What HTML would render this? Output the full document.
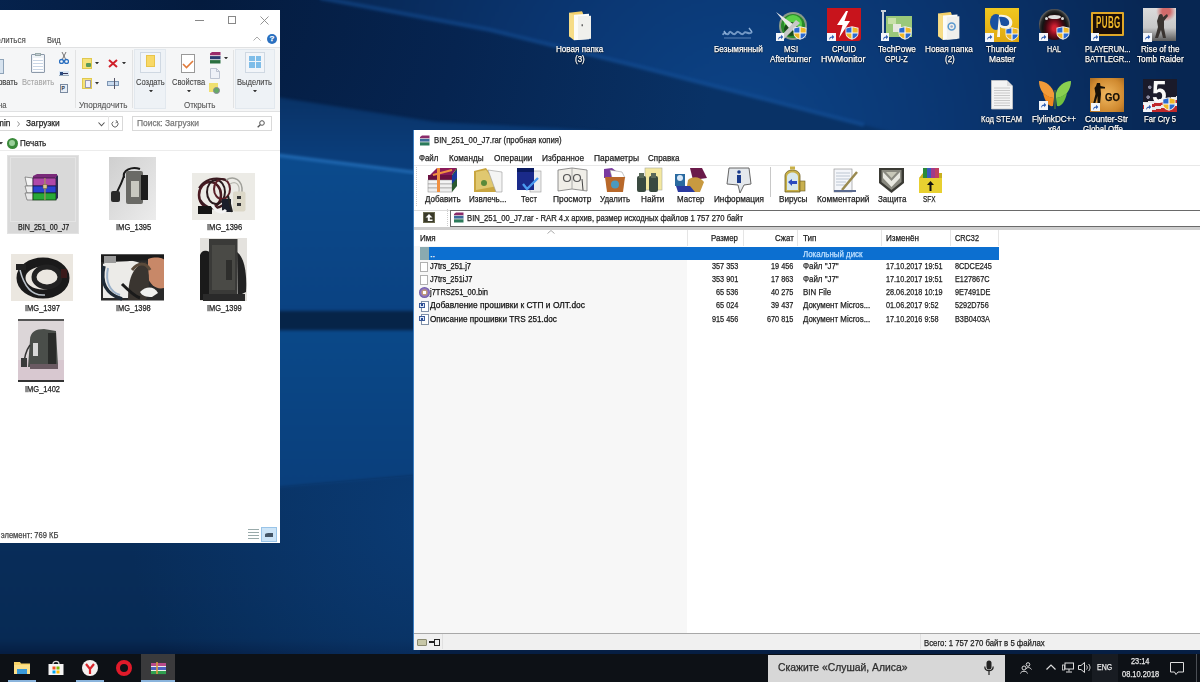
<!DOCTYPE html>
<html><head><meta charset="utf-8">
<style>
*{box-sizing:border-box}
html,body{margin:0;padding:0}
body{width:1200px;height:682px;overflow:hidden;position:relative;font-family:"Liberation Sans",sans-serif;background:#072a55}
.a{position:absolute}
.t{position:absolute;white-space:nowrap;line-height:1;transform-origin:0 0;-webkit-text-stroke:0.25px currentColor}
</style></head><body><div class="a" style="left:0;top:0;width:1200px;height:682px;overflow:hidden">
<svg class="a" style="left:0;top:0" width="1200" height="682" viewBox="0 0 1200 682">
  <defs>
    <filter id="bl" x="-10%" y="-10%" width="120%" height="120%" color-interpolation-filters="sRGB"><feGaussianBlur stdDeviation="1.8"/></filter>
    <radialGradient id="rg1" gradientUnits="userSpaceOnUse" cx="740" cy="140" r="440">
      <stop offset="0" stop-color="#0c4488"/><stop offset="0.5" stop-color="#0a3570"/><stop offset="1" stop-color="#072652"/>
    </radialGradient>
    <radialGradient id="rg0" gradientUnits="userSpaceOnUse" cx="200" cy="0" r="520">
      <stop offset="0" stop-color="#041b3e"/><stop offset="0.5" stop-color="#062450"/><stop offset="1" stop-color="#093266"/>
    </radialGradient>
    <linearGradient id="lgb" gradientUnits="userSpaceOnUse" x1="0" y1="480" x2="0" y2="660">
      <stop offset="0" stop-color="#082e5c"/><stop offset="0.88" stop-color="#072a54"/><stop offset="1" stop-color="#05183a"/>
    </linearGradient>
    <linearGradient id="lg1" gradientUnits="userSpaceOnUse" x1="0" y1="97" x2="0" y2="155">
      <stop offset="0" stop-color="#093266"/><stop offset="1" stop-color="#0a3d7a"/>
    </linearGradient>
    <linearGradient id="lgu" gradientUnits="userSpaceOnUse" x1="0" y1="160" x2="0" y2="310">
      <stop offset="0" stop-color="#0b4a8c"/><stop offset="1" stop-color="#0a4282"/>
    </linearGradient>
    <linearGradient id="lgl" gradientUnits="userSpaceOnUse" x1="0" y1="331" x2="0" y2="480">
      <stop offset="0" stop-color="#0a4888"/><stop offset="1" stop-color="#0a3f7c"/>
    </linearGradient>
    <radialGradient id="rgb2" gradientUnits="userSpaceOnUse" cx="430" cy="520" r="300">
      <stop offset="0" stop-color="#0b3e7a" stop-opacity="0.8"/><stop offset="1" stop-color="#0b3e7a" stop-opacity="0"/>
    </radialGradient>
  </defs>
  <rect width="1200" height="682" fill="url(#rg0)"/>
  <g filter="url(#bl)">
    <path d="M320,-2 L490,30 L640,67 L864,125 L1210,212 L1210,-10 L320,-10Z" fill="url(#rg1)"/>
    <path d="M-10,95 L276,97 L436,122 L560,128 L1210,180 L1210,700 L-10,700Z" fill="url(#lg1)"/>
    <path d="M-10,154 L276,155 L420,173 L420,310 L-10,310Z" fill="url(#lgu)"/>
    <path d="M-10,311 L420,311 L420,330 L-10,330Z" fill="#062448"/>
    <path d="M-10,331 L420,331 L420,475 L279,487 L-10,490Z" fill="url(#lgl)"/>
    <path d="M-10,490 L279,487 L420,475 L1210,440 L1210,700 L-10,700Z" fill="url(#lgb)"/>
  </g>
  <path d="M-10,490 L279,487 L420,475 L420,655 L-10,655Z" fill="url(#rgb2)"/>
  <path d="M-10,154 L276,155 L420,173" stroke="#2a7ac8" stroke-width="3" fill="none" opacity="0.75" filter="url(#bl)"/>
  <path d="M320,-2 L490,30 L640,67 L864,125" stroke="#1a5cab" stroke-width="4" fill="none" opacity="0.45" filter="url(#bl)"/>
</svg>
<svg class="a" style="left:569px;top:11px" width="22" height="29.5" viewBox="0 0 22 29"><path d="M0,1.5 L13,0 L14,2 L14,27 L0,25Z" fill="#f2cf6a"/><path d="M5,3.5 L20,2.5 L20,28 L5,29Z" fill="#fbfbf8"/><path d="M9,5 L22,4.5 L22,27.5 L9,28.5Z" fill="#f0f0ec"/><path d="M0,1.5 L5,3.5 L5,29 L0,25Z" fill="#f6dc86"/><rect x="12.5" y="13" width="1.5" height="2" fill="#666"/></svg>
<svg class="a" style="left:721px;top:25px" width="33" height="16" viewBox="0 0 33 16"><path d="M2,10 C3,5 6,12 8,8 C10,4 12,12 15,8 C18,4 20,12 23,8 C25,5 28,11 31,7" stroke="#8eb0d8" stroke-width="2" fill="none" opacity="0.8"/><path d="M3,13 L30,13" stroke="#6a90c0" stroke-width="1.4" opacity="0.6"/><path d="M28,3 L31,7 M3,6 L5,9" stroke="#8eb0d8" stroke-width="1.4"/></svg>
<svg class="a" style="left:775.5px;top:10.5px" width="32" height="30" viewBox="0 0 32 30"><circle cx="17" cy="15" r="14" fill="#8a9a8a"/><circle cx="17" cy="15" r="12" fill="#2a8a2a"/><circle cx="17" cy="13" r="9" fill="#5ad048"/><circle cx="15" cy="18" r="7" fill="#1a4a1a"/><path d="M0,1 L17,13 L30,27 L13,17Z" fill="#e8e8e8"/><path d="M4,26 L20,9 L24,12 L8,28Z" fill="#c8c8c8"/></svg>
<svg class="a" style="left:792.5px;top:25.8px" width="14" height="14" viewBox="0 0 14 14"><path d="M7,0.3 L13.5,1.8 L13.5,7 C13.5,10.5 10.5,12.8 7,13.8 C3.5,12.8 0.5,10.5 0.5,7 L0.5,1.8Z" fill="#f4f4f4"/><path d="M7.6,1.3 L12.7,2.5 L12.7,6.4 L7.6,6.4Z" fill="#f0b828"/><path d="M1.3,7.6 L6.4,7.6 L6.4,12.7 C3.5,11.8 1.3,10 1.3,7.6Z" fill="#f0b828"/><path d="M6.4,1.3 L1.3,2.5 L1.3,6.4 L6.4,6.4Z" fill="#2a6ad0"/><path d="M12.7,7.6 L7.6,7.6 L7.6,12.7 C10.5,11.8 12.7,10 12.7,7.6Z" fill="#2a6ad0"/></svg>
<div class="a" style="left:775.5px;top:32.5px;width:8.5px;height:8.5px;background:#f4f6fa"></div><svg class="a" style="left:776.5px;top:33.5px" width="6.5" height="6.5" viewBox="0 0 6 6"><path d="M1,5.8 C1,3.2 2,2.2 3.8,2.2 L3.8,0.8 L5.8,2.8 L3.8,4.8 L3.8,3.4 C2.6,3.4 1.8,4 1,5.8Z" fill="#2a5ab0"/></svg>
<div class="a" style="left:827px;top:7.5px;width:34px;height:33px;background:#c8141c;border-radius:0 0 3px 3px"></div><svg class="a" style="left:834px;top:11px" width="18" height="27" viewBox="0 0 18 27"><path d="M12,0 L3,14 L8.5,14 L5,27 L16,10 L10.5,10 L14,0Z" fill="#fff"/></svg>
<svg class="a" style="left:845px;top:25.8px" width="14" height="14" viewBox="0 0 14 14"><path d="M7,0.3 L13.5,1.8 L13.5,7 C13.5,10.5 10.5,12.8 7,13.8 C3.5,12.8 0.5,10.5 0.5,7 L0.5,1.8Z" fill="#f4f4f4"/><path d="M7.6,1.3 L12.7,2.5 L12.7,6.4 L7.6,6.4Z" fill="#f0b828"/><path d="M1.3,7.6 L6.4,7.6 L6.4,12.7 C3.5,11.8 1.3,10 1.3,7.6Z" fill="#f0b828"/><path d="M6.4,1.3 L1.3,2.5 L1.3,6.4 L6.4,6.4Z" fill="#2a6ad0"/><path d="M12.7,7.6 L7.6,7.6 L7.6,12.7 C10.5,11.8 12.7,10 12.7,7.6Z" fill="#2a6ad0"/></svg>
<div class="a" style="left:827px;top:32.5px;width:8.5px;height:8.5px;background:#f4f6fa"></div><svg class="a" style="left:828px;top:33.5px" width="6.5" height="6.5" viewBox="0 0 6 6"><path d="M1,5.8 C1,3.2 2,2.2 3.8,2.2 L3.8,0.8 L5.8,2.8 L3.8,4.8 L3.8,3.4 C2.6,3.4 1.8,4 1,5.8Z" fill="#2a5ab0"/></svg>
<div class="a" style="left:880.5px;top:10px;width:5px;height:2px;background:#c8d0d8"></div><div class="a" style="left:882px;top:10px;width:2px;height:23px;background:#c8d0d8"></div><div class="a" style="left:885.5px;top:15.5px;width:26.5px;height:21px;background:#9ac87a"></div><div class="a" style="left:888px;top:18px;width:8px;height:6px;background:#c8e0a8"></div><div class="a" style="left:893px;top:24px;width:8px;height:8px;background:#e8e8e0"></div>
<svg class="a" style="left:898px;top:25.8px" width="14" height="14" viewBox="0 0 14 14"><path d="M7,0.3 L13.5,1.8 L13.5,7 C13.5,10.5 10.5,12.8 7,13.8 C3.5,12.8 0.5,10.5 0.5,7 L0.5,1.8Z" fill="#f4f4f4"/><path d="M7.6,1.3 L12.7,2.5 L12.7,6.4 L7.6,6.4Z" fill="#f0b828"/><path d="M1.3,7.6 L6.4,7.6 L6.4,12.7 C3.5,11.8 1.3,10 1.3,7.6Z" fill="#f0b828"/><path d="M6.4,1.3 L1.3,2.5 L1.3,6.4 L6.4,6.4Z" fill="#2a6ad0"/><path d="M12.7,7.6 L7.6,7.6 L7.6,12.7 C10.5,11.8 12.7,10 12.7,7.6Z" fill="#2a6ad0"/></svg>
<div class="a" style="left:880.5px;top:32.5px;width:8.5px;height:8.5px;background:#f4f6fa"></div><svg class="a" style="left:881.5px;top:33.5px" width="6.5" height="6.5" viewBox="0 0 6 6"><path d="M1,5.8 C1,3.2 2,2.2 3.8,2.2 L3.8,0.8 L5.8,2.8 L3.8,4.8 L3.8,3.4 C2.6,3.4 1.8,4 1,5.8Z" fill="#2a5ab0"/></svg>
<svg class="a" style="left:938px;top:11.5px" width="21.5" height="28" viewBox="0 0 22 29"><path d="M0,1.5 L13,0 L14,2 L14,27 L0,25Z" fill="#f2cf6a"/><path d="M5,3.5 L20,2.5 L20,28 L5,29Z" fill="#fbfbf8"/><path d="M9,5 L22,4.5 L22,27.5 L9,28.5Z" fill="#f0f0ec"/><path d="M0,1.5 L5,3.5 L5,29 L0,25Z" fill="#f6dc86"/><circle cx="14" cy="15" r="3.6" fill="none" stroke="#5a9ad0" stroke-width="1.6"/><circle cx="14" cy="15" r="1.3" fill="#9ac"/></svg>
<div class="a" style="left:985px;top:8px;width:34px;height:34px;background:linear-gradient(#f0c820,#e0a810)"></div><svg class="a" style="left:988px;top:13px" width="28" height="26" viewBox="0 0 28 26"><ellipse cx="8" cy="9" rx="6" ry="8" fill="#1a50a0"/><path d="M11,2 C20,1 26,6 24,12 C22,17 15,16 12,14 L12,24 L9,24Z" fill="#f8f4e8"/><path d="M11,4 C18,3 22,7 21,11 C20,14 15,13 13,12Z" fill="#1a50a0"/></svg>
<svg class="a" style="left:1004.5px;top:26.5px" width="14" height="14" viewBox="0 0 14 14"><path d="M7,0.3 L13.5,1.8 L13.5,7 C13.5,10.5 10.5,12.8 7,13.8 C3.5,12.8 0.5,10.5 0.5,7 L0.5,1.8Z" fill="#f4f4f4"/><path d="M7.6,1.3 L12.7,2.5 L12.7,6.4 L7.6,6.4Z" fill="#f0b828"/><path d="M1.3,7.6 L6.4,7.6 L6.4,12.7 C3.5,11.8 1.3,10 1.3,7.6Z" fill="#f0b828"/><path d="M6.4,1.3 L1.3,2.5 L1.3,6.4 L6.4,6.4Z" fill="#2a6ad0"/><path d="M12.7,7.6 L7.6,7.6 L7.6,12.7 C10.5,11.8 12.7,10 12.7,7.6Z" fill="#2a6ad0"/></svg>
<div class="a" style="left:985px;top:33px;width:8.5px;height:8.5px;background:#f4f6fa"></div><svg class="a" style="left:986px;top:34px" width="6.5" height="6.5" viewBox="0 0 6 6"><path d="M1,5.8 C1,3.2 2,2.2 3.8,2.2 L3.8,0.8 L5.8,2.8 L3.8,4.8 L3.8,3.4 C2.6,3.4 1.8,4 1,5.8Z" fill="#2a5ab0"/></svg>
<div class="a" style="left:1039px;top:9px;width:31px;height:30.5px;border-radius:50%;background:radial-gradient(ellipse at 50% 62%,#d02030 0 2px,#8a1020 5px,#3a0810 9px,#141414 12px,#2a2a2a 14px,#5a5a5a 15.5px)"></div><div class="a" style="left:1048px;top:15px;width:13px;height:4px;border-radius:50%;background:#e0e0e0"></div><div class="a" style="left:1045px;top:17px;width:3px;height:3px;border-radius:50%;background:#ddd"></div><div class="a" style="left:1061px;top:17px;width:3px;height:3px;border-radius:50%;background:#ddd"></div>
<svg class="a" style="left:1056px;top:25.8px" width="14" height="14" viewBox="0 0 14 14"><path d="M7,0.3 L13.5,1.8 L13.5,7 C13.5,10.5 10.5,12.8 7,13.8 C3.5,12.8 0.5,10.5 0.5,7 L0.5,1.8Z" fill="#f4f4f4"/><path d="M7.6,1.3 L12.7,2.5 L12.7,6.4 L7.6,6.4Z" fill="#f0b828"/><path d="M1.3,7.6 L6.4,7.6 L6.4,12.7 C3.5,11.8 1.3,10 1.3,7.6Z" fill="#f0b828"/><path d="M6.4,1.3 L1.3,2.5 L1.3,6.4 L6.4,6.4Z" fill="#2a6ad0"/><path d="M12.7,7.6 L7.6,7.6 L7.6,12.7 C10.5,11.8 12.7,10 12.7,7.6Z" fill="#2a6ad0"/></svg>
<div class="a" style="left:1039px;top:32.5px;width:8.5px;height:8.5px;background:#f4f6fa"></div><svg class="a" style="left:1040px;top:33.5px" width="6.5" height="6.5" viewBox="0 0 6 6"><path d="M1,5.8 C1,3.2 2,2.2 3.8,2.2 L3.8,0.8 L5.8,2.8 L3.8,4.8 L3.8,3.4 C2.6,3.4 1.8,4 1,5.8Z" fill="#2a5ab0"/></svg>
<div class="a" style="left:1091px;top:12px;width:32.5px;height:23.5px;background:#1a0e08;border:2px solid #e0a828;border-radius:1px"></div><div class="t" style="left:1096px;top:14.5px;font-size:16px;font-weight:bold;color:#f0b828;transform:scaleX(0.5);transform-origin:0 0;letter-spacing:0.8px;-webkit-text-stroke:0">PUBG</div>
<div class="a" style="left:1090.5px;top:32.5px;width:8.5px;height:8.5px;background:#f4f6fa"></div><svg class="a" style="left:1091.5px;top:33.5px" width="6.5" height="6.5" viewBox="0 0 6 6"><path d="M1,5.8 C1,3.2 2,2.2 3.8,2.2 L3.8,0.8 L5.8,2.8 L3.8,4.8 L3.8,3.4 C2.6,3.4 1.8,4 1,5.8Z" fill="#2a5ab0"/></svg>
<div class="a" style="left:1143.3px;top:8.2px;width:33px;height:33px;background:radial-gradient(circle at 70% 10%,#d06a6a 0 4px,transparent 10px),linear-gradient(#dcdcdc,#c8c8c8 60%,#5a5a5a)"></div><svg class="a" style="left:1152px;top:12px" width="18" height="28" viewBox="0 0 18 28"><path d="M7,3 C9,1 11,2 11,5 L15,2 L16,4 L12,9 L12,16 L14,26 L11,26 L9,18 L6,26 L3,26 L6,15 L5,9Z" fill="#3a3430"/></svg>
<div class="a" style="left:1143.3px;top:33px;width:8.5px;height:8.5px;background:#f4f6fa"></div><svg class="a" style="left:1144.3px;top:34px" width="6.5" height="6.5" viewBox="0 0 6 6"><path d="M1,5.8 C1,3.2 2,2.2 3.8,2.2 L3.8,0.8 L5.8,2.8 L3.8,4.8 L3.8,3.4 C2.6,3.4 1.8,4 1,5.8Z" fill="#2a5ab0"/></svg>
<svg class="a" style="left:990.8px;top:80px" width="22" height="29.5" viewBox="0 0 22 29.5"><path d="M0.5,0.5 L16,0.5 L21.5,6 L21.5,29 L0.5,29Z" fill="#f4f4f4" stroke="#c8c8c8" stroke-width="0.8"/><path d="M16,0.5 L16,6 L21.5,6Z" fill="#ddd"/><path d="M3,8 L19,8 M3,10.5 L19,10.5 M3,13 L19,13 M3,15.5 L19,15.5 M3,18 L19,18 M3,20.5 L19,20.5 M3,23 L19,23 M3,25.5 L19,25.5" stroke="#c4c4c4" stroke-width="0.9"/></svg>
<svg class="a" style="left:1037.5px;top:80px" width="34" height="30" viewBox="0 0 34 30"><path d="M1,1 C8,1 14,6 16,13 L16,18 C13,18 8,16 5,13 C2,9 1,5 1,1Z" fill="#f29a38"/><path d="M5,13 C9,16 14,18 16,18 L15,26 C11,27 7,22 5,13Z" fill="#f08a20"/><path d="M33,1 C26,1 20,6 18,13 L18,18 C21,18 26,16 29,13 C32,9 33,5 33,1Z" fill="#8ad050"/><path d="M29,13 C25,16 20,18 18,18 L19,26 C23,27 27,22 29,13Z" fill="#70c040"/><path d="M17,10 L17,29" stroke="#5a8a30" stroke-width="1"/></svg>
<div class="a" style="left:1039px;top:101px;width:8.5px;height:8.5px;background:#f4f6fa"></div><svg class="a" style="left:1040px;top:102px" width="6.5" height="6.5" viewBox="0 0 6 6"><path d="M1,5.8 C1,3.2 2,2.2 3.8,2.2 L3.8,0.8 L5.8,2.8 L3.8,4.8 L3.8,3.4 C2.6,3.4 1.8,4 1,5.8Z" fill="#2a5ab0"/></svg>
<div class="a" style="left:1090px;top:77.5px;width:34px;height:34px;background:radial-gradient(circle at 50% 50%,#f0b860,#d08a30 70%,#a86a20)"></div><svg class="a" style="left:1092px;top:83px" width="14" height="22" viewBox="0 0 14 22"><path d="M5,0 L8,0 L8.5,3 L13,4 L13,5.5 L8.5,5.5 L9,11 L8,21 L5.5,21 L5.5,13 L3,21 L1,21 L3.5,11 L2.5,5 L4,3Z" fill="#161008"/></svg><div class="t" style="left:1104.5px;top:92.5px;font-size:10px;font-weight:bold;color:#161008;transform:scaleX(0.95);transform-origin:0 0">GO</div>
<div class="a" style="left:1091px;top:102.5px;width:8.5px;height:8.5px;background:#f4f6fa"></div><svg class="a" style="left:1092px;top:103.5px" width="6.5" height="6.5" viewBox="0 0 6 6"><path d="M1,5.8 C1,3.2 2,2.2 3.8,2.2 L3.8,0.8 L5.8,2.8 L3.8,4.8 L3.8,3.4 C2.6,3.4 1.8,4 1,5.8Z" fill="#2a5ab0"/></svg>
<div class="a" style="left:1143.3px;top:79.2px;width:33.5px;height:32.5px;background:radial-gradient(circle at 20% 25%,#8a8aa0 0 1.5px,transparent 2px),radial-gradient(circle at 40% 15%,#8a8aa0 0 1.5px,transparent 2px),radial-gradient(circle at 15% 55%,#8a8aa0 0 1.5px,transparent 2px),linear-gradient(170deg,#1a1a2a 0 60%,#e8e8e8 60% 68%,#c0282a 68% 76%,#e8e8e8 76% 84%,#c0282a 84%)"></div><div class="t" style="left:1152px;top:76.5px;font-size:31px;font-weight:bold;color:#f8f8f8;transform:scaleX(0.85);transform-origin:0 0;-webkit-text-stroke:0">5</div>
<svg class="a" style="left:1162px;top:97px" width="14" height="14" viewBox="0 0 14 14"><path d="M7,0.3 L13.5,1.8 L13.5,7 C13.5,10.5 10.5,12.8 7,13.8 C3.5,12.8 0.5,10.5 0.5,7 L0.5,1.8Z" fill="#f4f4f4"/><path d="M7.6,1.3 L12.7,2.5 L12.7,6.4 L7.6,6.4Z" fill="#f0b828"/><path d="M1.3,7.6 L6.4,7.6 L6.4,12.7 C3.5,11.8 1.3,10 1.3,7.6Z" fill="#f0b828"/><path d="M6.4,1.3 L1.3,2.5 L1.3,6.4 L6.4,6.4Z" fill="#2a6ad0"/><path d="M12.7,7.6 L7.6,7.6 L7.6,12.7 C10.5,11.8 12.7,10 12.7,7.6Z" fill="#2a6ad0"/></svg>
<div class="a" style="left:1143.5px;top:103px;width:8.5px;height:8.5px;background:#f4f6fa"></div><svg class="a" style="left:1144.5px;top:104px" width="6.5" height="6.5" viewBox="0 0 6 6"><path d="M1,5.8 C1,3.2 2,2.2 3.8,2.2 L3.8,0.8 L5.8,2.8 L3.8,4.8 L3.8,3.4 C2.6,3.4 1.8,4 1,5.8Z" fill="#2a5ab0"/></svg>
<div class="t" style="left:556.48px;top:44.81px;font-size:8.8px;color:#fff;transform:scaleX(0.9212);text-shadow:0 0 1.5px rgba(0,0,0,.9),0 1px 1px rgba(0,0,0,.8);">Новая папка</div>
<div class="t" style="left:575.16px;top:55.11px;font-size:8.8px;color:#fff;transform:scaleX(0.9000);text-shadow:0 0 1.5px rgba(0,0,0,.9),0 1px 1px rgba(0,0,0,.8);">(3)</div>
<div class="t" style="left:714.00px;top:44.81px;font-size:8.8px;color:#fff;transform:scaleX(0.9276);text-shadow:0 0 1.5px rgba(0,0,0,.9),0 1px 1px rgba(0,0,0,.8);">Безымянный</div>
<div class="t" style="left:783.96px;top:44.81px;font-size:8.8px;color:#fff;transform:scaleX(0.9000);text-shadow:0 0 1.5px rgba(0,0,0,.9),0 1px 1px rgba(0,0,0,.8);">MSI</div>
<div class="t" style="left:770.40px;top:55.11px;font-size:8.8px;color:#fff;transform:scaleX(0.9360);text-shadow:0 0 1.5px rgba(0,0,0,.9),0 1px 1px rgba(0,0,0,.8);">Afterburner</div>
<div class="t" style="left:831.50px;top:44.81px;font-size:8.8px;color:#fff;transform:scaleX(0.8765);text-shadow:0 0 1.5px rgba(0,0,0,.9),0 1px 1px rgba(0,0,0,.8);">CPUID</div>
<div class="t" style="left:821.25px;top:55.11px;font-size:8.8px;color:#fff;transform:scaleX(1.0113);text-shadow:0 0 1.5px rgba(0,0,0,.9),0 1px 1px rgba(0,0,0,.8);">HWMonitor</div>
<div class="t" style="left:877.65px;top:44.81px;font-size:8.8px;color:#fff;transform:scaleX(0.9335);text-shadow:0 0 1.5px rgba(0,0,0,.9),0 1px 1px rgba(0,0,0,.8);">TechPowe</div>
<div class="t" style="left:885.25px;top:55.11px;font-size:8.8px;color:#fff;transform:scaleX(0.8292);text-shadow:0 0 1.5px rgba(0,0,0,.9),0 1px 1px rgba(0,0,0,.8);">GPU-Z</div>
<div class="t" style="left:924.70px;top:44.81px;font-size:8.8px;color:#fff;transform:scaleX(0.9319);text-shadow:0 0 1.5px rgba(0,0,0,.9),0 1px 1px rgba(0,0,0,.8);">Новая папка</div>
<div class="t" style="left:944.66px;top:55.11px;font-size:8.8px;color:#fff;transform:scaleX(0.9000);text-shadow:0 0 1.5px rgba(0,0,0,.9),0 1px 1px rgba(0,0,0,.8);">(2)</div>
<div class="t" style="left:986.45px;top:44.81px;font-size:8.8px;color:#fff;transform:scaleX(0.9245);text-shadow:0 0 1.5px rgba(0,0,0,.9),0 1px 1px rgba(0,0,0,.8);">Thunder</div>
<div class="t" style="left:988.75px;top:55.11px;font-size:8.8px;color:#fff;transform:scaleX(0.9557);text-shadow:0 0 1.5px rgba(0,0,0,.9),0 1px 1px rgba(0,0,0,.8);">Master</div>
<div class="t" style="left:1047.00px;top:44.81px;font-size:8.8px;color:#fff;transform:scaleX(0.8178);text-shadow:0 0 1.5px rgba(0,0,0,.9),0 1px 1px rgba(0,0,0,.8);">HAL</div>
<div class="t" style="left:1084.50px;top:44.81px;font-size:8.8px;color:#fff;transform:scaleX(0.8407);text-shadow:0 0 1.5px rgba(0,0,0,.9),0 1px 1px rgba(0,0,0,.8);">PLAYERUN...</div>
<div class="t" style="left:1084.50px;top:55.11px;font-size:8.8px;color:#fff;transform:scaleX(0.8563);text-shadow:0 0 1.5px rgba(0,0,0,.9),0 1px 1px rgba(0,0,0,.8);">BATTLEGR...</div>
<div class="t" style="left:1140.60px;top:44.81px;font-size:8.8px;color:#fff;transform:scaleX(0.9153);text-shadow:0 0 1.5px rgba(0,0,0,.9),0 1px 1px rgba(0,0,0,.8);">Rise of the</div>
<div class="t" style="left:1136.50px;top:55.11px;font-size:8.8px;color:#fff;transform:scaleX(0.9362);text-shadow:0 0 1.5px rgba(0,0,0,.9),0 1px 1px rgba(0,0,0,.8);">Tomb Raider</div>
<div class="t" style="left:981.00px;top:114.81px;font-size:8.8px;color:#fff;transform:scaleX(0.8592);text-shadow:0 0 1.5px rgba(0,0,0,.9),0 1px 1px rgba(0,0,0,.8);">Код STEAM</div>
<div class="t" style="left:1032.00px;top:114.81px;font-size:8.8px;color:#fff;transform:scaleX(0.9181);text-shadow:0 0 1.5px rgba(0,0,0,.9),0 1px 1px rgba(0,0,0,.8);">FlylinkDC++</div>
<div class="t" style="left:1047.62px;top:125.11px;font-size:8.8px;color:#fff;transform:scaleX(0.9000);text-shadow:0 0 1.5px rgba(0,0,0,.9),0 1px 1px rgba(0,0,0,.8);">x64</div>
<div class="t" style="left:1085.00px;top:114.81px;font-size:8.8px;color:#fff;transform:scaleX(0.9455);text-shadow:0 0 1.5px rgba(0,0,0,.9),0 1px 1px rgba(0,0,0,.8);">Counter-Str</div>
<div class="t" style="left:1083.24px;top:125.11px;font-size:8.8px;color:#fff;transform:scaleX(0.9000);text-shadow:0 0 1.5px rgba(0,0,0,.9),0 1px 1px rgba(0,0,0,.8);">Global Offe...</div>
<div class="t" style="left:1144.00px;top:114.81px;font-size:8.8px;color:#fff;transform:scaleX(0.8727);text-shadow:0 0 1.5px rgba(0,0,0,.9),0 1px 1px rgba(0,0,0,.8);">Far Cry 5</div>
<div class="a" style="left:0;top:10px;width:280px;height:533px;background:#fff"></div>
<div class="a" style="left:0;top:0;width:280px;height:543px;overflow:hidden">
<div class="a" style="left:195px;top:20px;width:9px;height:1px;background:#888"></div>
<div class="a" style="left:228px;top:16px;width:8px;height:8px;border:1px solid #888"></div>
<svg class="a" style="left:259.5px;top:15.5px" width="9" height="9" viewBox="0 0 9 9"><path d="M0.5,0.5 L8.5,8.5 M8.5,0.5 L0.5,8.5" stroke="#888" stroke-width="0.9"/></svg>
<div class="t" style="left:-17.73px;top:35.81px;font-size:8.8px;color:#444;transform:scaleX(0.9000);-webkit-text-stroke:0.1px currentColor;">Поделиться</div>
<div class="t" style="left:47.00px;top:35.81px;font-size:8.8px;color:#444;transform:scaleX(0.8480);-webkit-text-stroke:0.1px currentColor;">Вид</div>
<svg class="a" style="left:252.5px;top:35.5px" width="8" height="5" viewBox="0 0 8 5"><path d="M0.5,4.5 L4,1 L7.5,4.5" stroke="#aaa" fill="none" stroke-width="1"/></svg>
<div class="a" style="left:267px;top:34px;width:10px;height:10px;border-radius:50%;background:#2a70c0"></div>
<div class="t" style="left:269.6px;top:35.3px;font-size:8px;font-weight:bold;color:#fff">?</div>
<div class="a" style="left:0;top:47px;width:280px;height:65px;background:#f5f6f7;border-top:1px solid #e0e1e2;border-bottom:1px solid #e0e1e2"></div>
<div class="a" style="left:75px;top:50px;width:1px;height:58px;background:#e2e3e4"></div>
<div class="a" style="left:132px;top:50px;width:1px;height:58px;background:#e2e3e4"></div>
<div class="a" style="left:233px;top:50px;width:1px;height:58px;background:#e2e3e4"></div>
<div class="a" style="left:-3px;top:59px;width:7px;height:15px;background:#d7e3ef;border:1px solid #8ea3b8"></div>
<div class="a" style="left:31px;top:54px;width:14px;height:19px;background:#eef2f7;border:1px solid #8d9aaa;border-radius:1px"></div>
<div class="a" style="left:35px;top:52.5px;width:6px;height:3px;background:#c5ccd5;border:1px solid #9aa"></div>
<div class="a" style="left:33px;top:58px;width:10px;height:13px;background:repeating-linear-gradient(#fff 0 2px,#c9d6e6 2px 3px)"></div>
<svg class="a" style="left:59px;top:52px" width="10" height="12" viewBox="0 0 10 12"><path d="M3,8 L7,0 M7,8 L3,0" stroke="#555" stroke-width="0.8"/><circle cx="2.5" cy="9.5" r="2" fill="none" stroke="#2a6fc0" stroke-width="1.3"/><circle cx="7.5" cy="9.5" r="2" fill="none" stroke="#2a6fc0" stroke-width="1.3"/></svg>
<div class="a" style="left:59px;top:71px;width:10px;height:5px;background:#d9e6f5;border-bottom:1px solid #9ab"></div>
<div class="a" style="left:60px;top:72px;width:3px;height:3px;background:#2b4a80"></div>
<div class="a" style="left:63px;top:73px;width:5px;height:1px;background:#335"></div>
<div class="a" style="left:60px;top:84px;width:8px;height:9px;background:#e9eef5;border:1px solid #7a8aa0"></div>
<div class="t" style="left:61.5px;top:86px;font-size:5px;color:#345">P</div>
<div class="t" style="left:-22.75px;top:78.04px;font-size:8.6px;color:#333;transform:scaleX(0.8800);-webkit-text-stroke:0.1px currentColor;">Копировать</div>
<div class="t" style="left:21.60px;top:78.04px;font-size:8.6px;color:#a6a6a6;transform:scaleX(0.8806);-webkit-text-stroke:0.1px currentColor;">Вставить</div>
<div class="t" style="left:-46.09px;top:101.44px;font-size:8.6px;color:#555;transform:scaleX(0.9000);-webkit-text-stroke:0.1px currentColor;">Буфер обмена</div>
<div class="a" style="left:82px;top:58px;width:10px;height:11px;background:#f5e27a;border:1px solid #e0c850"></div>
<div class="a" style="left:86px;top:63px;width:5px;height:4px;background:#5a9a5a;border-radius:1px"></div>
<svg class="a" style="left:94.5px;top:61.5px" width="4" height="2.5" viewBox="0 0 4 2.5"><path d="M0,0 L4,0 L2,2.5Z" fill="#333"/></svg>
<svg class="a" style="left:108px;top:59px" width="10" height="9" viewBox="0 0 10 9"><path d="M1,1 L9,8 M9,1 L1,8" stroke="#d0202a" stroke-width="2"/></svg>
<svg class="a" style="left:121.5px;top:61.5px" width="4" height="2.5" viewBox="0 0 4 2.5"><path d="M0,0 L4,0 L2,2.5Z" fill="#333"/></svg>
<div class="a" style="left:82px;top:78px;width:10px;height:11px;background:#f5e27a;border:1px solid #e0c850"></div>
<div class="a" style="left:85px;top:80px;width:6px;height:8px;background:#eef;border:1px solid #99a"></div>
<svg class="a" style="left:94.5px;top:82px" width="4" height="2.5" viewBox="0 0 4 2.5"><path d="M0,0 L4,0 L2,2.5Z" fill="#333"/></svg>
<div class="a" style="left:107px;top:81px;width:12px;height:5px;background:#c9dbef;border:1px solid #7e96b3"></div>
<div class="a" style="left:114px;top:78px;width:1px;height:11px;background:#556"></div>
<div class="t" style="left:79.30px;top:101.14px;font-size:8.6px;color:#555;transform:scaleX(0.9477);-webkit-text-stroke:0.1px currentColor;">Упорядочить</div>
<div class="a" style="left:134px;top:49px;width:32px;height:60px;background:#eef2f6;border:1px solid #e2e8ee"></div>
<div class="a" style="left:140px;top:52px;width:21px;height:21px;background:#f2f5f9;border:1px solid #cfd8e2"></div>
<div class="a" style="left:145.5px;top:55px;width:9.5px;height:12px;background:#f8d866;border:1px solid #e8c44a"></div>
<div class="t" style="left:136.00px;top:78.04px;font-size:8.6px;color:#444;transform:scaleX(0.8798);-webkit-text-stroke:0.1px currentColor;">Создать</div>
<svg class="a" style="left:148.5px;top:89.5px" width="4" height="2.5" viewBox="0 0 4 2.5"><path d="M0,0 L4,0 L2,2.5Z" fill="#333"/></svg>
<div class="a" style="left:181px;top:54px;width:14px;height:19px;background:#fff;border:1px solid #999"></div>
<svg class="a" style="left:182px;top:60px" width="12" height="9" viewBox="0 0 12 9"><path d="M1,4 L4.5,7.5 L11,1" stroke="#e07a3a" stroke-width="1.6" fill="none"/></svg>
<div class="t" style="left:171.90px;top:78.04px;font-size:8.6px;color:#444;transform:scaleX(0.8765);-webkit-text-stroke:0.1px currentColor;">Свойства</div>
<svg class="a" style="left:186.5px;top:89.5px" width="4" height="2.5" viewBox="0 0 4 2.5"><path d="M0,0 L4,0 L2,2.5Z" fill="#333"/></svg>
<svg class="a" style="left:208.5px;top:52px" width="12" height="12" viewBox="0 0 12 12"><path d="M1,1.5 L3,0 L11.5,0 L11.5,3.5 L1,3.5Z" fill="#9a2a6a"/><rect x="1" y="4" width="10.5" height="3.5" fill="#2a3a70"/><rect x="1" y="8" width="10.5" height="3.5" fill="#2a7040"/><path d="M1,3.7 L11.5,3.7 M1,7.7 L11.5,7.7" stroke="#eee" stroke-width="0.6"/></svg>
<svg class="a" style="left:223.5px;top:56.5px" width="4" height="2.5" viewBox="0 0 4 2.5"><path d="M0,0 L4,0 L2,2.5Z" fill="#333"/></svg>
<svg class="a" style="left:210px;top:68px" width="10" height="11" viewBox="0 0 10 11"><path d="M0.5,0.5 L6.5,0.5 L9.5,3.5 L9.5,10.5 L0.5,10.5Z" fill="#eef1f8" stroke="#b0b8c8" stroke-width="0.8"/><path d="M6.5,0.5 L6.5,3.5 L9.5,3.5" fill="none" stroke="#b0b8c8" stroke-width="0.8"/></svg>
<div class="a" style="left:209px;top:83px;width:9px;height:9px;background:#f0e070"></div>
<div class="a" style="left:213px;top:87px;width:7px;height:7px;border-radius:50%;background:#6a6;border:1px solid #889"></div>
<div class="t" style="left:184.00px;top:101.14px;font-size:8.6px;color:#555;transform:scaleX(0.9298);-webkit-text-stroke:0.1px currentColor;">Открыть</div>
<div class="a" style="left:235px;top:49px;width:40px;height:60px;background:#eef2f6;border:1px solid #e2e8ee"></div>
<div class="a" style="left:245px;top:52px;width:20px;height:21px;background:#f2f5f9;border:1px solid #cfd8e2"></div>
<div class="a" style="left:249px;top:55.5px;width:5.5px;height:5.5px;background:#7fbde8"></div>
<div class="a" style="left:255.5px;top:55.5px;width:5.5px;height:5.5px;background:#7fbde8"></div>
<div class="a" style="left:249px;top:62px;width:5.5px;height:5.5px;background:#7fbde8"></div>
<div class="a" style="left:255.5px;top:62px;width:5.5px;height:5.5px;background:#7fbde8"></div>
<div class="t" style="left:237.00px;top:78.14px;font-size:8.6px;color:#444;transform:scaleX(0.8822);-webkit-text-stroke:0.1px currentColor;">Выделить</div>
<svg class="a" style="left:252.5px;top:89.5px" width="4" height="2.5" viewBox="0 0 4 2.5"><path d="M0,0 L4,0 L2,2.5Z" fill="#333"/></svg>
<div class="a" style="left:-2px;top:115.5px;width:125px;height:15.5px;border:1px solid #d9d9d9;background:#fff"></div>
<div class="a" style="left:107.5px;top:116px;width:1px;height:14px;background:#e5e5e5"></div>
<div class="t" style="left:-13.17px;top:118.54px;font-size:9.2px;color:#222;transform:scaleX(0.9000);">Admin</div>
<svg class="a" style="left:17px;top:120.5px" width="3" height="6" viewBox="0 0 3 6"><path d="M0.5,0.5 L2.5,3 L0.5,5.5" stroke="#888" fill="none" stroke-width="0.9"/></svg>
<div class="t" style="left:26.25px;top:118.54px;font-size:9.2px;color:#222;transform:scaleX(0.9116);">Загрузки</div>
<svg class="a" style="left:98px;top:122px" width="7" height="5" viewBox="0 0 7 5"><path d="M0.5,0.5 L3.5,3.8 L6.5,0.5" stroke="#555" fill="none" stroke-width="1.1"/></svg>
<svg class="a" style="left:111px;top:119.5px" width="8" height="8" viewBox="0 0 8 8"><path d="M5.8,1.6 A3,3 0 1 1 2.2,1.6" stroke="#666" fill="none" stroke-width="1"/><path d="M4.5,0 L6.5,1.5 L4.5,3" stroke="#666" fill="none" stroke-width="0.9"/></svg>
<div class="a" style="left:131.5px;top:115.5px;width:140px;height:15.5px;border:1px solid #d9d9d9;background:#fff"></div>
<div class="t" style="left:137.30px;top:118.54px;font-size:9.2px;color:#777;transform:scaleX(0.9168);">Поиск: Загрузки</div>
<svg class="a" style="left:257px;top:120px" width="8" height="8" viewBox="0 0 8 8"><circle cx="5" cy="3" r="2.3" stroke="#555" fill="none" stroke-width="1"/><path d="M3.3,4.7 L0.7,7.3" stroke="#555" stroke-width="1.3"/></svg>
<svg class="a" style="left:-1.5px;top:142px" width="4" height="2.5" viewBox="0 0 4 2.5"><path d="M0,0 L4,0 L2,2.5Z" fill="#444"/></svg>
<div class="a" style="left:6.5px;top:137.5px;width:11px;height:11px;border-radius:50%;background:#3a8a3a"></div>
<div class="a" style="left:9px;top:140px;width:6px;height:6px;border-radius:50%;background:#9ad09a"></div>
<div class="t" style="left:20.40px;top:138.54px;font-size:9.2px;color:#222;transform:scaleX(0.8727);">Печать</div>
<div class="a" style="left:0;top:149.5px;width:280px;height:1px;background:#ececec"></div>
<div class="a" style="left:7px;top:155px;width:72px;height:79px;background:#d9d9d9;border:1px solid #e2e2e2"></div><div class="a" style="left:9.5px;top:157px;width:66px;height:65px;border:1px solid #e4e4e4"></div>
<div class="t" style="left:17.50px;top:223.24px;font-size:8.6px;color:#222;transform:scaleX(0.8317);">BIN_251_00_J7</div>
<div class="t" style="left:115.75px;top:223.14px;font-size:8.6px;color:#222;transform:scaleX(0.8779);">IMG_1395</div>
<div class="t" style="left:206.50px;top:223.14px;font-size:8.6px;color:#222;transform:scaleX(0.8779);">IMG_1396</div>
<div class="t" style="left:25.00px;top:304.44px;font-size:8.6px;color:#222;transform:scaleX(0.8716);">IMG_1397</div>
<div class="t" style="left:115.80px;top:304.44px;font-size:8.6px;color:#222;transform:scaleX(0.8642);">IMG_1398</div>
<div class="t" style="left:206.80px;top:304.44px;font-size:8.6px;color:#222;transform:scaleX(0.8642);">IMG_1399</div>
<div class="t" style="left:25.00px;top:385.34px;font-size:8.6px;color:#222;transform:scaleX(0.8716);">IMG_1402</div>
<svg class="a" style="left:0;top:0" width="280" height="400" viewBox="0 0 280 400">
  <defs>
    <filter id="tb1" x="-20%" y="-20%" width="140%" height="140%" color-interpolation-filters="sRGB"><feGaussianBlur stdDeviation="0.6"/></filter>
    <linearGradient id="th1" x1="0" y1="0" x2="1" y2="1"><stop offset="0" stop-color="#cfcfcf"/><stop offset="1" stop-color="#ececec"/></linearGradient>
  </defs>
  <!-- winrar big icon -->
  <g>
    <path d="M33,176 L37,174 L57,174 L57,177 L53,179 L33,179Z" fill="#7a2a7a"/>
    <path d="M25,177 L33,178 L33,186 L27,186Z" fill="#f4f4f4" stroke="#555" stroke-width="0.6"/>
    <rect x="33" y="178" width="23" height="8" fill="#b048a8" stroke="#3a1a40" stroke-width="0.8"/>
    <path d="M25,186 L33,186 L33,193 L27,193Z" fill="#eee" stroke="#555" stroke-width="0.6"/>
    <rect x="33" y="186" width="23" height="7" fill="#2a40d0" stroke="#101a50" stroke-width="0.8"/>
    <path d="M25,193 L33,193 L33,200 L27,200Z" fill="#e8e8e8" stroke="#555" stroke-width="0.6"/>
    <rect x="33" y="193" width="23" height="7" fill="#28a838" stroke="#103a10" stroke-width="0.8"/>
    <path d="M56,177 L58,175 L58,198 L56,200Z" fill="#2a2a50"/>
    <rect x="44" y="178" width="1.8" height="22" fill="#a89060" opacity="0.7"/>
    <rect x="43" y="184.5" width="4" height="4" fill="#d8c890" stroke="#6a5a30" stroke-width="0.5"/>
  </g>
  <!-- IMG_1395 -->
  <g filter="url(#tb1)">
    <rect x="109" y="157" width="47" height="63" fill="url(#th1)"/>
    <path d="M124,178 C122,170 132,166 140,169" stroke="#1a1a1a" stroke-width="2" fill="none"/>
    <path d="M124,176 C121,185 118,190 116,194" stroke="#1a1a1a" stroke-width="2" fill="none"/>
    <rect x="111" y="191" width="9" height="11" rx="2" fill="#2a2a2a"/>
    <rect x="126" y="171" width="17" height="33" rx="2" fill="#6a6a66"/>
    <rect x="131" y="181" width="8" height="16" fill="#c8c8c0"/>
    <rect x="141" y="175" width="7" height="25" fill="#1c1c1c"/>
  </g>
  <!-- IMG_1396 -->
  <g filter="url(#tb1)">
    <rect x="192" y="173" width="63" height="47" fill="#ecebe6"/>
    <ellipse cx="210" cy="195" rx="11" ry="13" stroke="#4a1a22" stroke-width="2.5" fill="none"/>
    <ellipse cx="216" cy="192" rx="9" ry="12" stroke="#2a1a1e" stroke-width="2" fill="none"/>
    <ellipse cx="222" cy="189" rx="8" ry="10" stroke="#5a2028" stroke-width="2" fill="none"/>
    <path d="M199,188 C204,180 214,176 226,180" stroke="#3a1a20" stroke-width="2" fill="none"/>
    <path d="M200,200 C205,208 215,212 226,203" stroke="#3a1a20" stroke-width="2.5" fill="none"/>
    <path d="M226,180 C234,175 243,180 242,192" stroke="#a0a09a" stroke-width="1.5" fill="none"/>
    <path d="M230,184 C236,180 240,185 239,192" stroke="#b8b8b0" stroke-width="1.2" fill="none"/>
    <rect x="233" y="191.5" width="12.5" height="20" rx="2" fill="#dcd8c8"/>
    <rect x="237" y="196" width="4" height="3" fill="#333"/>
    <rect x="237" y="203" width="4" height="3" fill="#333"/>
    <rect x="198" y="206" width="14" height="8" fill="#151515"/>
    <rect x="222" y="199" width="9" height="13" fill="#1a1e2a"/>
    <path d="M212,205 C216,212 222,214 226,210" stroke="#f4f4f4" stroke-width="3" fill="none"/>
    <path d="M228,196 L232,212" stroke="#222" stroke-width="2"/>
  </g>
  <!-- IMG_1397 -->
  <g filter="url(#tb1)">
    <rect x="11" y="254" width="62" height="47" fill="#ebe7e0"/>
    <ellipse cx="43" cy="278" rx="22" ry="16" stroke="#1a1a1a" stroke-width="9" fill="none"/>
    <ellipse cx="47" cy="277" rx="13" ry="10" stroke="#222" stroke-width="5" fill="none"/>
    <path d="M20,270 C25,290 35,296 45,295" stroke="#b8c0c8" stroke-width="1.5" fill="none"/>
    <rect x="16" y="264" width="10" height="6" fill="#222"/>
    <rect x="61" y="269" width="6" height="9" fill="#3a1a1a"/>
  </g>
  <!-- IMG_1398 -->
  <g filter="url(#tb1)">
    <rect x="101" y="254.5" width="63" height="46" fill="#2a2a2a"/>
    <path d="M103,264 C112,258 130,258 142,264 L140,298 L103,298Z" fill="#ecebe8"/>
    <path d="M104,266 C100,282 106,294 122,299" stroke="#1e2a36" stroke-width="3.5" fill="none"/>
    <path d="M108,268 C105,282 110,292 120,295" stroke="#9ab0c8" stroke-width="2" fill="none"/>
    <path d="M101,254.5 L164,254.5 L164,262 C150,258 130,262 101,262Z" fill="#1a1a1a"/>
    <rect x="104" y="256" width="12" height="7" fill="#9a9a9a"/>
    <path d="M148,259 C156,256 164,258 164,260 L164,288 C156,290 150,284 148,278Z" fill="#c88868"/>
    <path d="M128,300 C128,280 132,266 146,262 C150,270 150,290 146,300Z" fill="#3a3530"/>
    <path d="M140,292 C146,286 154,286 158,293 L152,297 C146,297 142,296 140,292Z" fill="#f0f0ee"/>
    <path d="M122,284 C128,290 134,296 140,298" stroke="#1a1a1a" stroke-width="3" fill="none"/>
    <path d="M132,270 C138,262 146,262 150,270" stroke="#5a4a3a" stroke-width="3" fill="none"/>
  </g>
  <!-- IMG_1399 -->
  <g filter="url(#tb1)">
    <rect x="200" y="238" width="47" height="63" fill="#e4e2de"/>
    <path d="M200,255 C202,250 205,250 210,252 L210,300 L200,300Z" fill="#1a1a1a"/>
    <path d="M237,252 C245,258 247,275 246,292 L238,296Z" fill="#222"/>
    <rect x="209" y="239" width="28.5" height="56" fill="#3a3a38"/>
    <rect x="212" y="245" width="23" height="45" fill="#4a4a46"/>
    <rect x="226" y="260" width="6" height="20" fill="#2e2e2c"/>
    <rect x="203" y="294" width="42" height="7" fill="#2a2a2a"/>
  </g>
  <!-- IMG_1402 -->
  <g filter="url(#tb1)">
    <rect x="18" y="319" width="46" height="63" fill="#dcd6d8"/>
    <rect x="18" y="319" width="46" height="2" fill="#555"/>
    <rect x="18" y="380" width="46" height="2" fill="#333"/>
    <rect x="18" y="360" width="46" height="20" fill="#d8c8d0"/>
    <path d="M30,340 C30,332 36,329 44,329 L56,331 L58,366 L28,367Z" fill="#4a4e4a"/>
    <rect x="48" y="333" width="8" height="33" fill="#2a2c2a"/>
    <rect x="33" y="343" width="5" height="13" fill="#d8d8d8"/>
    <path d="M30,345 C25,352 24,360 24,366" stroke="#333" stroke-width="1.5" fill="none"/>
    <rect x="21" y="358" width="6" height="9" fill="#3a3a3a"/>
    <rect x="30" y="364" width="28" height="5" fill="#6a5a62"/>
  </g>
</svg>
<div class="t" style="left:-35.22px;top:531.14px;font-size:8.6px;color:#444;transform:scaleX(0.8800);">Выбран 1 элемент: 769 КБ</div>
<div class="a" style="left:248px;top:529px;width:11px;height:10px;background:repeating-linear-gradient(#9aa 0 1px,transparent 1px 3px)"></div>
<div class="a" style="left:261px;top:527px;width:16px;height:15px;background:#cce4f7;border:1px solid #99c4e8"></div>
<div class="a" style="left:265px;top:533px;width:8px;height:4px;background:#456;border-radius:40% 0 0 0"></div>
</div>
<div class="a" style="left:413px;top:130px;width:787px;height:520px;background:#fff;border-left:1px solid #3f7fc0"></div>
<div class="a" style="left:0;top:0;width:1200px;height:654px;overflow:hidden">
<svg class="a" style="left:419px;top:134.5px" width="11" height="11" viewBox="0 0 11 11"><path d="M1,2 L3,0.5 L10.5,0.5 L10.5,3.5 L1,3.5Z" fill="#8a2a6a"/><rect x="1" y="3.8" width="9.5" height="3" fill="#3a6a9a"/><rect x="1" y="7.2" width="9.5" height="3.3" fill="#2a7a5a"/><path d="M0.5,3.5 L10.5,3.5 M0.5,6.9 L10.5,6.9" stroke="#ddd" stroke-width="0.5"/></svg>
<div class="t" style="left:434.20px;top:135.81px;font-size:8.8px;color:#222;transform:scaleX(0.8833);">BIN_251_00_J7.rar (пробная копия)</div>
<div class="t" style="left:419.20px;top:153.61px;font-size:8.8px;color:#222;transform:scaleX(0.8921);">Файл</div>
<div class="t" style="left:448.70px;top:153.61px;font-size:8.8px;color:#222;transform:scaleX(0.9254);">Команды</div>
<div class="t" style="left:493.60px;top:153.61px;font-size:8.8px;color:#222;transform:scaleX(0.9329);">Операции</div>
<div class="t" style="left:541.90px;top:153.61px;font-size:8.8px;color:#222;transform:scaleX(0.9441);">Избранное</div>
<div class="t" style="left:593.50px;top:153.61px;font-size:8.8px;color:#222;transform:scaleX(0.9594);">Параметры</div>
<div class="t" style="left:648.00px;top:153.61px;font-size:8.8px;color:#222;transform:scaleX(0.9125);">Справка</div>
<svg class="a" style="left:414px;top:163px" width="540" height="34" viewBox="414 163 540 34">
    <!-- add -->
    <path d="M430,175 L437,168 L457,168 L452,175Z" fill="#8a1a5a"/>
    <rect x="428" y="175" width="24" height="5" fill="#6a1040"/>
    <rect x="428" y="180" width="24" height="4" fill="#f4f4f4" stroke="#888" stroke-width="0.5"/>
    <rect x="428" y="184" width="24" height="4" fill="#f0f0f0" stroke="#888" stroke-width="0.5"/>
    <rect x="428" y="188" width="24" height="4" fill="#eee" stroke="#888" stroke-width="0.5"/>
    <path d="M452,175 L457,168 L457,186 L452,192Z" fill="#2a5a30"/>
    <path d="M452,176 L457,170 L457,178 L452,184Z" fill="#1a3aa0"/>
    <rect x="437" y="168" width="3" height="24" fill="#f09040"/>
    <path d="M433,175 L452,170" stroke="#f09040" stroke-width="2"/>
    <!-- extract -->
    <path d="M474,171 L486,168 L500,186 L500,192 L474,192Z" fill="#c9a640"/>
    <path d="M476,172 L486,170 L498,186 L476,190Z" fill="#e0c870"/>
    <path d="M488,170 L502,172 L502,192 L496,192Z" fill="#f4f4f4" stroke="#999" stroke-width="0.6"/>
    <circle cx="484" cy="183" r="3" fill="#5a8a3a"/>
    <!-- test -->
    <rect x="530" y="171" width="11" height="21" fill="#eee" stroke="#999" stroke-width="0.6"/>
    <rect x="517" y="168" width="17" height="22" fill="#1a2a8a"/>
    <rect x="517" y="168" width="17" height="4" fill="#0a1a60"/>
    <path d="M523,184 L527,189 L538,178" stroke="#4a9af0" stroke-width="2.4" fill="none"/>
    <!-- view -->
    <path d="M558,170 L572,168 L587,170 L587,191 L572,189 L558,191Z" fill="#f0eee8" stroke="#777" stroke-width="0.8"/>
    <path d="M572,168 L572,189" stroke="#999" stroke-width="0.8"/>
    <circle cx="567" cy="178" r="3.5" fill="none" stroke="#555" stroke-width="1.2"/>
    <circle cx="577" cy="178" r="3.5" fill="none" stroke="#555" stroke-width="1.2"/>
    <path d="M582,179 L583,190" stroke="#444" stroke-width="1"/>
    <!-- delete -->
    <path d="M604,169 L612,168 L625,178 L604,178Z" fill="#7a3aa0"/>
    <path d="M610,170 L622,172 L625,178 L612,178Z" fill="#fff" stroke="#888" stroke-width="0.5"/>
    <path d="M605,177 L625,177 L623,192 L607,192Z" fill="#b8682a"/>
    <circle cx="615" cy="184.5" r="4" fill="#4a9ac0"/>
    <!-- find -->
    <rect x="645" y="168" width="17" height="22" fill="#f4e8a0" stroke="#aa9" stroke-width="0.6"/>
    <rect x="637" y="176" width="9" height="16" rx="2" fill="#3a4a40"/>
    <rect x="649" y="176" width="9" height="16" rx="2" fill="#3a4a40"/>
    <rect x="639" y="173" width="5" height="5" fill="#5a6a5a"/>
    <rect x="651" y="173" width="5" height="5" fill="#5a6a5a"/>
    <!-- wizard -->
    <rect x="675" y="174" width="10" height="12" fill="#2a6aa0"/>
    <circle cx="680" cy="178" r="3" fill="#d8e8f8"/>
    <path d="M690,168 L702,168 L707,178 L693,180Z" fill="#6a1a4a"/>
    <path d="M688,180 C692,176 700,176 704,182 L700,192 L686,192Z" fill="#c89a40"/>
    <path d="M676,186 L690,186 L695,192 L678,192Z" fill="#2a3aa0"/>
    <!-- info -->
    <path d="M729,168 L749,168 L751,184 L744,185 L740,193 L738,185 L727,184Z" fill="#e4e8ec" stroke="#666" stroke-width="1"/>
    <rect x="737" y="175" width="4" height="8" fill="#1a3a8a"/>
    <circle cx="739" cy="172" r="1.8" fill="#1a3a8a"/>
    <!-- separator -->
    <rect x="770" y="167" width="1" height="30" fill="#c8c8c8"/>
    <!-- virus -->
    <path d="M785,176 C785,168 800,168 800,176 L800,192 L785,192Z" fill="#c8b048" stroke="#6a5a20" stroke-width="0.8"/>
    <path d="M787,177 C787,171 798,171 798,177 L798,190 L787,190Z" fill="#d8e8ec"/>
    <path d="M788,182 L792,179 L792,181 L797,181 L797,184 L792,184 L792,186Z" fill="#2a4ac0"/>
    <rect x="790" y="166.5" width="5" height="3" fill="#c8b048"/>
    <rect x="800" y="181" width="5" height="10" fill="#c8b050" stroke="#6a5a20" stroke-width="0.6"/>
    <!-- comment -->
    <rect x="834" y="169" width="18" height="23" fill="#f4f6fa" stroke="#888" stroke-width="0.6"/>
    <path d="M836,173 L850,173 M836,176 L850,176 M836,179 L850,179 M836,182 L846,182 M836,185 L846,185" stroke="#9ab" stroke-width="0.6"/>
    <path d="M842,190 L857,172" stroke="#9a8a50" stroke-width="2.5"/>
    <rect x="834" y="190" width="22" height="2" fill="#5a6a90"/>
    <!-- protect -->
    <path d="M879,168 L904,168 L904,183 L891.5,193 L879,183Z" fill="#3a3a34"/>
    <path d="M881.5,170 L901.5,170 L901.5,182 L891.5,190 L881.5,182Z" fill="#8a8a80"/>
    <path d="M883,172 L891.5,181 L900,172 L900,178 L891.5,187 L883,178Z" fill="#e8e8e0"/>
    <path d="M886,172 L897,172 L891.5,178Z" fill="#c8c8b8"/>
    <!-- sfx -->
    <rect x="919" y="178" width="23" height="15" fill="#e8d030"/>
    <path d="M919,178 L923,173 L942,173 L942,178Z" fill="#c8b020"/>
    <rect x="923" y="168" width="4" height="10" fill="#2a8a3a"/>
    <rect x="927" y="168" width="4" height="10" fill="#3a5ac0"/>
    <rect x="931" y="168" width="4" height="10" fill="#a03a8a"/>
    <rect x="935" y="168" width="4" height="10" fill="#c04060"/>
    <path d="M930.5,181 L927,185 L929.5,185 L929.5,191 L931.5,191 L931.5,185 L934,185Z" fill="#111"/>
  </svg>
<div class="a" style="left:416px;top:165px;width:1px;height:41px;border-left:1px dotted #c8c8c8"></div><div class="a" style="left:414px;top:164.5px;width:786px;height:1px;background:#e8e8e8"></div>
<div class="t" style="left:424.70px;top:195.41px;font-size:8.8px;color:#222;transform:scaleX(0.9206);">Добавить</div>
<div class="t" style="left:468.80px;top:195.41px;font-size:8.8px;color:#222;transform:scaleX(0.9130);">Извлечь...</div>
<div class="t" style="left:521.30px;top:195.41px;font-size:8.8px;color:#222;transform:scaleX(0.8734);">Тест</div>
<div class="t" style="left:553.00px;top:195.41px;font-size:8.8px;color:#222;transform:scaleX(0.9531);">Просмотр</div>
<div class="t" style="left:600.00px;top:195.41px;font-size:8.8px;color:#222;transform:scaleX(0.8930);">Удалить</div>
<div class="t" style="left:640.80px;top:195.41px;font-size:8.8px;color:#222;transform:scaleX(0.9319);">Найти</div>
<div class="t" style="left:676.70px;top:195.41px;font-size:8.8px;color:#222;transform:scaleX(0.9034);">Мастер</div>
<div class="t" style="left:714.20px;top:195.41px;font-size:8.8px;color:#222;transform:scaleX(0.9280);">Информация</div>
<div class="t" style="left:779.00px;top:195.41px;font-size:8.8px;color:#222;transform:scaleX(0.9312);">Вирусы</div>
<div class="t" style="left:816.70px;top:195.41px;font-size:8.8px;color:#222;transform:scaleX(0.9473);">Комментарий</div>
<div class="t" style="left:878.30px;top:195.41px;font-size:8.8px;color:#222;transform:scaleX(0.9105);">Защита</div>
<div class="t" style="left:923.30px;top:195.41px;font-size:8.8px;color:#222;transform:scaleX(0.7304);">SFX</div>
<div class="a" style="left:414px;top:209.5px;width:786px;height:1px;background:#dcdcdc"></div>
<div class="a" style="left:423px;top:212px;width:11.5px;height:10.5px;background:#3a3a2a;border:1px solid #6a6a50"></div>
<svg class="a" style="left:424px;top:213px" width="10" height="9" viewBox="0 0 10 9"><path d="M5,1 L1.5,4.5 L3.8,4.5 L3.8,8 L8.5,8 L8.5,6.5 L5.8,6.5 L5.8,4.5 L8.5,4.5Z" fill="#fff"/></svg>
<div class="a" style="left:446.5px;top:209px;width:1px;height:19px;border-left:1px dotted #ccc"></div>
<div class="a" style="left:450px;top:210px;width:760px;height:16.5px;border:1px solid #6a6a6a;background:#fff"></div>
<svg class="a" style="left:452.5px;top:212px" width="11" height="11" viewBox="0 0 11 11"><path d="M1,2 L3,0.5 L10.5,0.5 L10.5,3.5 L1,3.5Z" fill="#8a2a6a"/><rect x="1" y="3.8" width="9.5" height="3" fill="#3a6a9a"/><rect x="1" y="7.2" width="9.5" height="3.3" fill="#2a7a5a"/><path d="M0.5,3.5 L10.5,3.5 M0.5,6.9 L10.5,6.9" stroke="#ddd" stroke-width="0.5"/></svg>
<div class="t" style="left:467.20px;top:214.41px;font-size:8.8px;color:#222;transform:scaleX(0.8739);">BIN_251_00_J7.rar - RAR 4.x архив, размер исходных файлов 1 757 270 байт</div>
<div class="a" style="left:414px;top:227px;width:786px;height:2.5px;background:#cfcfcf"></div>
<div class="a" style="left:414px;top:246px;width:273px;height:387px;background:#f7f7f7"></div>
<div class="t" style="left:419.90px;top:234.21px;font-size:8.8px;color:#222;transform:scaleX(0.9101);">Имя</div>
<div class="t" style="left:711.25px;top:234.21px;font-size:8.8px;color:#222;transform:scaleX(0.8927);">Размер</div>
<div class="t" style="left:775.00px;top:234.21px;font-size:8.8px;color:#222;transform:scaleX(0.8859);">Сжат</div>
<div class="t" style="left:802.75px;top:234.21px;font-size:8.8px;color:#222;transform:scaleX(0.9203);">Тип</div>
<div class="t" style="left:886.00px;top:234.21px;font-size:8.8px;color:#222;transform:scaleX(0.9188);">Изменён</div>
<div class="t" style="left:955.00px;top:234.21px;font-size:8.8px;color:#222;transform:scaleX(0.8318);">CRC32</div>
<svg class="a" style="left:547px;top:229.5px" width="8" height="4" viewBox="0 0 8 4"><path d="M0.5,3.5 L4,0.5 L7.5,3.5" stroke="#aaa" fill="none" stroke-width="1"/></svg>
<div class="a" style="left:686.5px;top:230px;width:1px;height:16px;background:#e5e5e5"></div>
<div class="a" style="left:742.5px;top:230px;width:1px;height:16px;background:#e5e5e5"></div>
<div class="a" style="left:797px;top:230px;width:1px;height:16px;background:#e5e5e5"></div>
<div class="a" style="left:881px;top:230px;width:1px;height:16px;background:#e5e5e5"></div>
<div class="a" style="left:950px;top:230px;width:1px;height:16px;background:#e5e5e5"></div>
<div class="a" style="left:998px;top:230px;width:1px;height:16px;background:#e5e5e5"></div>
<div class="a" style="left:429px;top:247px;width:569.5px;height:12.8px;background:#0c6fd0"></div>
<div class="a" style="left:419.5px;top:247px;width:9px;height:12.8px;background:#8aaab0"></div>
<div class="t" style="left:430.00px;top:249.81px;font-size:8.8px;color:#fff;transform:scaleX(1.0000);">..</div>
<div class="t" style="left:802.75px;top:249.81px;font-size:8.8px;color:#bfe0ff;transform:scaleX(0.9000);">Локальный диск</div>
<div class="a" style="left:420px;top:261.5px;width:8px;height:10.5px;background:#fff;border:1px solid #b0b0b0"></div>
<div class="t" style="left:430.00px;top:261.71px;font-size:8.8px;color:#111;transform:scaleX(0.8553);">J7trs_251.j7</div>
<div class="t" style="left:711.85px;top:261.71px;font-size:8.8px;color:#222;transform:scaleX(0.8300);">357 353</div>
<div class="t" style="left:771.41px;top:261.71px;font-size:8.8px;color:#222;transform:scaleX(0.8300);">19 456</div>
<div class="t" style="left:802.75px;top:261.71px;font-size:8.8px;color:#222;transform:scaleX(0.9000);">Файл "J7"</div>
<div class="t" style="left:886.00px;top:261.71px;font-size:8.8px;color:#222;transform:scaleX(0.8260);">17.10.2017 19:51</div>
<div class="t" style="left:955.00px;top:261.71px;font-size:8.8px;color:#222;transform:scaleX(0.8300);">8CDCE245</div>
<div class="a" style="left:420px;top:274.7px;width:8px;height:10.5px;background:#fff;border:1px solid #b0b0b0"></div>
<div class="t" style="left:430.00px;top:274.91px;font-size:8.8px;color:#111;transform:scaleX(0.8498);">J7trs_251iJ7</div>
<div class="t" style="left:711.85px;top:274.91px;font-size:8.8px;color:#222;transform:scaleX(0.8300);">353 901</div>
<div class="t" style="left:771.41px;top:274.91px;font-size:8.8px;color:#222;transform:scaleX(0.8300);">17 863</div>
<div class="t" style="left:802.75px;top:274.91px;font-size:8.8px;color:#222;transform:scaleX(0.9000);">Файл "J7"</div>
<div class="t" style="left:886.00px;top:274.91px;font-size:8.8px;color:#222;transform:scaleX(0.8260);">17.10.2017 19:51</div>
<div class="t" style="left:955.00px;top:274.91px;font-size:8.8px;color:#222;transform:scaleX(0.8300);">E127867C</div>
<div class="a" style="left:419px;top:287.4px;width:11px;height:11px;border-radius:50%;background:radial-gradient(circle at 50% 50%,#fff 0 1.5px,#c8a070 2px,#8a70c0 4px,#6a5aa0 5.5px)"></div>
<div class="t" style="left:430.00px;top:288.11px;font-size:8.8px;color:#111;transform:scaleX(0.8530);">j7TRS251_00.bin</div>
<div class="t" style="left:715.91px;top:288.11px;font-size:8.8px;color:#222;transform:scaleX(0.8300);">65 536</div>
<div class="t" style="left:771.41px;top:288.11px;font-size:8.8px;color:#222;transform:scaleX(0.8300);">40 275</div>
<div class="t" style="left:802.75px;top:288.11px;font-size:8.8px;color:#222;transform:scaleX(0.9000);">BIN File</div>
<div class="t" style="left:886.00px;top:288.11px;font-size:8.8px;color:#222;transform:scaleX(0.8260);">28.06.2018 10:19</div>
<div class="t" style="left:955.00px;top:288.11px;font-size:8.8px;color:#222;transform:scaleX(0.8300);">9E7491DE</div>
<div class="a" style="left:420.5px;top:301.1px;width:8.5px;height:10.5px;background:#fff;border:1px solid #8090a8"></div>
<div class="a" style="left:419px;top:302.8px;width:5.5px;height:5px;background:#dde8f8;border:1px solid #3a5a9a"></div>
<div class="a" style="left:420.5px;top:304.3px;width:2.5px;height:2px;background:#2a4a90"></div>
<div class="t" style="left:430.00px;top:301.31px;font-size:8.8px;color:#111;transform:scaleX(0.9560);">Добавление прошивки к СТП и ОЛТ.doc</div>
<div class="t" style="left:715.91px;top:301.31px;font-size:8.8px;color:#222;transform:scaleX(0.8300);">65 024</div>
<div class="t" style="left:771.41px;top:301.31px;font-size:8.8px;color:#222;transform:scaleX(0.8300);">39 437</div>
<div class="t" style="left:802.75px;top:301.31px;font-size:8.8px;color:#222;transform:scaleX(0.9000);">Документ Micros...</div>
<div class="t" style="left:886.00px;top:301.31px;font-size:8.8px;color:#222;transform:scaleX(0.8260);">01.06.2017 9:52</div>
<div class="t" style="left:955.00px;top:301.31px;font-size:8.8px;color:#222;transform:scaleX(0.8300);">5292D756</div>
<div class="a" style="left:420.5px;top:314.3px;width:8.5px;height:10.5px;background:#fff;border:1px solid #8090a8"></div>
<div class="a" style="left:419px;top:316.0px;width:5.5px;height:5px;background:#dde8f8;border:1px solid #3a5a9a"></div>
<div class="a" style="left:420.5px;top:317.5px;width:2.5px;height:2px;background:#2a4a90"></div>
<div class="t" style="left:430.00px;top:314.51px;font-size:8.8px;color:#111;transform:scaleX(0.9290);">Описание прошивки TRS 251.doc</div>
<div class="t" style="left:711.85px;top:314.51px;font-size:8.8px;color:#222;transform:scaleX(0.8300);">915 456</div>
<div class="t" style="left:767.35px;top:314.51px;font-size:8.8px;color:#222;transform:scaleX(0.8300);">670 815</div>
<div class="t" style="left:802.75px;top:314.51px;font-size:8.8px;color:#222;transform:scaleX(0.9000);">Документ Micros...</div>
<div class="t" style="left:886.00px;top:314.51px;font-size:8.8px;color:#222;transform:scaleX(0.8260);">17.10.2016 9:58</div>
<div class="t" style="left:955.00px;top:314.51px;font-size:8.8px;color:#222;transform:scaleX(0.8300);">B3B0403A</div>
<div class="a" style="left:414px;top:632.5px;width:786px;height:1px;background:#a8a8a8"></div>
<div class="a" style="left:414px;top:633.5px;width:786px;height:16px;background:#f0f0f0"></div>
<div class="a" style="left:416.5px;top:639px;width:10.5px;height:7px;background:#c8c8a8;border:1px solid #8a8a70;border-radius:1px"></div>
<div class="a" style="left:428.5px;top:641px;width:5px;height:2px;background:#222"></div>
<div class="a" style="left:433.5px;top:639px;width:6px;height:6.5px;border:1.5px solid #222"></div>
<div class="a" style="left:442px;top:634px;width:1px;height:15px;background:#e0e0e0"></div>
<div class="a" style="left:920px;top:634px;width:1px;height:15px;background:#e0e0e0"></div>
<div class="t" style="left:924.25px;top:639.14px;font-size:8.6px;color:#222;transform:scaleX(0.9045);">Всего: 1 757 270 байт в 5 файлах</div>
</div>
<!-- TASKBAR -->
<div class="a" style="left:0;top:654px;width:1200px;height:28px;background:#0d1116"></div>
<!-- explorer -->
<svg class="a" style="left:14px;top:661px" width="16" height="14" viewBox="0 0 16 14"><path d="M0,1 L6,1 L7,2.5 L16,2.5 L16,13 L0,13Z" fill="#f8d468"/><rect x="0" y="4" width="16" height="9" fill="#fbe08a"/><rect x="3" y="8" width="10" height="5" fill="#3a9ad8"/></svg>
<div class="a" style="left:8px;top:680px;width:28px;height:2px;background:#8ab4dc"></div>
<!-- store -->
<svg class="a" style="left:48px;top:660px" width="16" height="15" viewBox="0 0 16 15"><path d="M5,4 C5,0.5 11,0.5 11,4" stroke="#ddd" stroke-width="1.2" fill="none"/><rect x="0.5" y="4" width="15" height="11" fill="#f4f4f4"/><rect x="4.5" y="6.5" width="3" height="3" fill="#f25022"/><rect x="8.5" y="6.5" width="3" height="3" fill="#7fba00"/><rect x="4.5" y="10.5" width="3" height="3" fill="#00a4ef"/><rect x="8.5" y="10.5" width="3" height="3" fill="#ffb900"/></svg>
<!-- yandex -->
<div class="a" style="left:82px;top:660px;width:16px;height:16px;border-radius:50%;background:#f4f0f0"></div>
<svg class="a" style="left:85px;top:663px" width="10" height="11" viewBox="0 0 10 11"><path d="M1,1 L5,6 L9,1 M5,6 L5,11" stroke="#d8242a" stroke-width="2.2" fill="none"/></svg>
<div class="a" style="left:76px;top:680px;width:28px;height:2px;background:#8ab4dc"></div>
<!-- opera -->
<div class="a" style="left:116px;top:660px;width:16px;height:16px;border-radius:50%;border:4px solid #e01a2a"></div>
<!-- winrar active -->
<div class="a" style="left:141px;top:654px;width:34px;height:28px;background:#3a3a3c"></div>
<svg class="a" style="left:150px;top:662px" width="17" height="13" viewBox="0 0 17 13"><rect x="1" y="1" width="15" height="3.5" fill="#b84a8a"/><rect x="1" y="4.8" width="15" height="3.5" fill="#5060c0"/><rect x="1" y="8.6" width="15" height="3.5" fill="#30a050"/><rect x="1" y="4" width="15" height="1" fill="#eee"/><rect x="1" y="8" width="15" height="1" fill="#eee"/><rect x="6" y="0" width="2" height="12" fill="#d89a40" opacity=".8"/></svg>
<div class="a" style="left:141px;top:680px;width:34px;height:2px;background:#8ab4dc"></div>
<!-- search -->
<div class="a" style="left:768px;top:655px;width:237px;height:27px;background:#d7d7d7"></div>
<svg class="a" style="left:984px;top:660px" width="10" height="16" viewBox="0 0 10 16"><rect x="2.5" y="0.5" width="5" height="9" rx="2.5" fill="#222"/><path d="M0.8,6.5 C0.8,12 9.2,12 9.2,6.5" stroke="#222" stroke-width="1.2" fill="none"/><path d="M5,11 L5,15" stroke="#222" stroke-width="1.2"/></svg>
<!-- tray -->
<svg class="a" style="left:1020px;top:662px" width="12" height="12" viewBox="0 0 12 12"><circle cx="4" cy="6" r="2" stroke="#ddd" fill="none" stroke-width="1"/><path d="M0.5,11.5 C1,8.5 7,8.5 7.5,11.5" stroke="#ddd" fill="none" stroke-width="1"/><circle cx="8" cy="2.5" r="1.8" stroke="#ddd" fill="none" stroke-width="1"/><path d="M6,7 C7,5 10,5 11.5,7.5" stroke="#ddd" fill="none" stroke-width="1"/></svg>
<svg class="a" style="left:1046px;top:664px" width="10" height="6" viewBox="0 0 10 6"><path d="M0.5,5.5 L5,1 L9.5,5.5" stroke="#ddd" fill="none" stroke-width="1.2"/></svg>
<svg class="a" style="left:1062px;top:662px" width="12" height="11" viewBox="0 0 12 11"><rect x="3" y="1" width="8.5" height="6" stroke="#ddd" fill="none" stroke-width="1"/><rect x="0.5" y="3" width="2" height="5" stroke="#ddd" fill="none" stroke-width="0.8"/><path d="M7,7 L7,9.5 M4,10 L10,10" stroke="#ddd" stroke-width="1"/></svg>
<svg class="a" style="left:1078px;top:662px" width="13" height="11" viewBox="0 0 13 11"><path d="M0.5,3.5 L3,3.5 L6.5,0.5 L6.5,10.5 L3,7.5 L0.5,7.5Z" stroke="#ddd" fill="none" stroke-width="1"/><path d="M8.5,3.5 C9.5,4.5 9.5,6.5 8.5,7.5 M10.5,2 C12.5,4 12.5,7 10.5,9" stroke="#ddd" fill="none" stroke-width="1"/></svg>
<div class="a" style="left:1092px;top:654px;width:26px;height:28px;background:#181c22"></div><div class="a" style="left:1196px;top:654px;width:1px;height:28px;background:#4a4e54"></div>
<svg class="a" style="left:1170px;top:662px" width="14" height="14" viewBox="0 0 14 14"><path d="M0.5,0.5 L13.5,0.5 L13.5,10 L8,10 L6,12.5 L4.5,10 L0.5,10Z" stroke="#ddd" fill="none" stroke-width="1"/></svg>


<div class="t" style="left:778.10px;top:662.16px;font-size:11px;color:#2a2a2a;transform:scaleX(0.9410);">Скажите «Слушай, Алиса»</div>
<div class="t" style="left:1096.90px;top:663.21px;font-size:8.8px;color:#e8e8e8;transform:scaleX(0.7918);">ENG</div>
<div class="t" style="left:1130.80px;top:657.31px;font-size:8.8px;color:#e8e8e8;transform:scaleX(0.8356);">23:14</div>
<div class="t" style="left:1121.65px;top:670.01px;font-size:8.8px;color:#e8e8e8;transform:scaleX(0.8436);">08.10.2018</div>
</div></body></html>
